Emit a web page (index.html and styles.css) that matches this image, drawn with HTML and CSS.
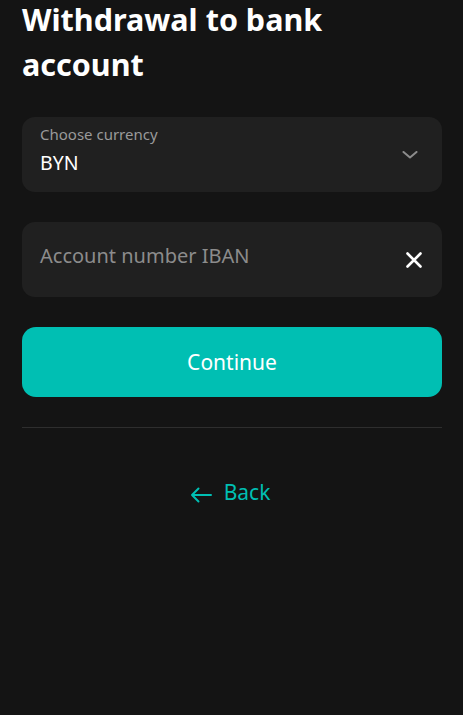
FILE: index.html
```html
<!DOCTYPE html>
<html lang="en">
<head>
<meta charset="utf-8">
<title>Withdrawal to bank account</title>
<link rel="stylesheet" href="styles.css">
</head>
<body>
<main class="page">
  <h1 class="title">Withdrawal to bank account</h1>
  <div class="field field-select">
    <div class="field-text">
      <span class="field-label">Choose currency</span>
      <span class="field-value">BYN</span>
    </div>
    <svg class="chevron" width="16" height="8" viewBox="0 0 16 8" aria-hidden="true">
      <path d="M1.5 1 L8 6.5 L14.5 1" fill="none" stroke="#8c8c8c" stroke-width="2" stroke-linecap="round" stroke-linejoin="round"/>
    </svg>
  </div>
  <div class="field field-input">
    <span class="placeholder">Account number IBAN</span>
    <svg class="clear" width="16" height="16" viewBox="0 0 16 16" aria-hidden="true">
      <path d="M1.5 1.5 L14.5 14.5 M14.5 1.5 L1.5 14.5" fill="none" stroke="#ffffff" stroke-width="2.6" stroke-linecap="round"/>
    </svg>
  </div>
  <button class="btn-primary" type="button">Continue</button>
  <hr class="divider">
  <a class="back" href="#">
    <svg class="back-arrow" width="22" height="16" viewBox="0 0 22 16" aria-hidden="true">
      <path d="M21 8 H2 M8.5 1.5 L2 8 L8.5 14.5" fill="none" stroke="#00bfb3" stroke-width="2" stroke-linecap="round" stroke-linejoin="round"/>
    </svg>
    <span>Back</span>
  </a>
</main>
</body>
</html>
```

FILE: styles.css
```css
html, body {
  margin: 0;
  padding: 0;
  background: #141414;
}
body {
  font-family: "Noto Sans", "Open Sans", sans-serif;
  color: #ffffff;
}
.page {
  padding: 0 21px 0 22px;
  display: flex;
  flex-direction: column;
}
.title {
  margin: -3px 0 0;
  font-size: 30.5px;
  font-weight: 700;
  line-height: 45px;
  letter-spacing: 0;
}
.field {
  box-sizing: border-box;
  height: 75px;
  background: #202020;
  border-radius: 13px;
  display: flex;
  align-items: center;
  justify-content: space-between;
  padding: 0 20px 0 18px;
}
.field-select {
  margin-top: 30px;
  align-items: flex-start;
  padding-top: 7px;
  padding-right: 24px;
}
.field-text {
  display: flex;
  flex-direction: column;
}
.field-label {
  font-size: 15px;
  line-height: 20px;
  color: #9a9a9a;
}
.field-value {
  font-size: 19.5px;
  line-height: 28px;
  margin-top: 5px;
  color: #ffffff;
}
.chevron {
  align-self: center;
  margin-top: -7px;
}
.field-input {
  margin-top: 30px;
}
.placeholder {
  font-size: 20px;
  line-height: 28px;
  color: #8c8c8c;
  margin-bottom: 7px;
}
.btn-primary {
  margin-top: 30px;
  height: 70px;
  border: none;
  border-radius: 14px;
  background: #00bfb3;
  color: #ffffff;
  font-family: inherit;
  font-size: 21px;
  cursor: pointer;
  padding: 0;
}
.divider {
  margin: 30px 0 0;
  border: none;
  border-top: 1px solid #2e2e2e;
  height: 0;
}
.back {
  align-self: center;
  margin-top: 50px;
  margin-right: 4px;
  display: flex;
  align-items: center;
  gap: 12px;
  color: #00bfb3;
  text-decoration: none;
  font-size: 21px;
  line-height: 28px;
}
.back-arrow {
  margin-top: 5px;
}
```
